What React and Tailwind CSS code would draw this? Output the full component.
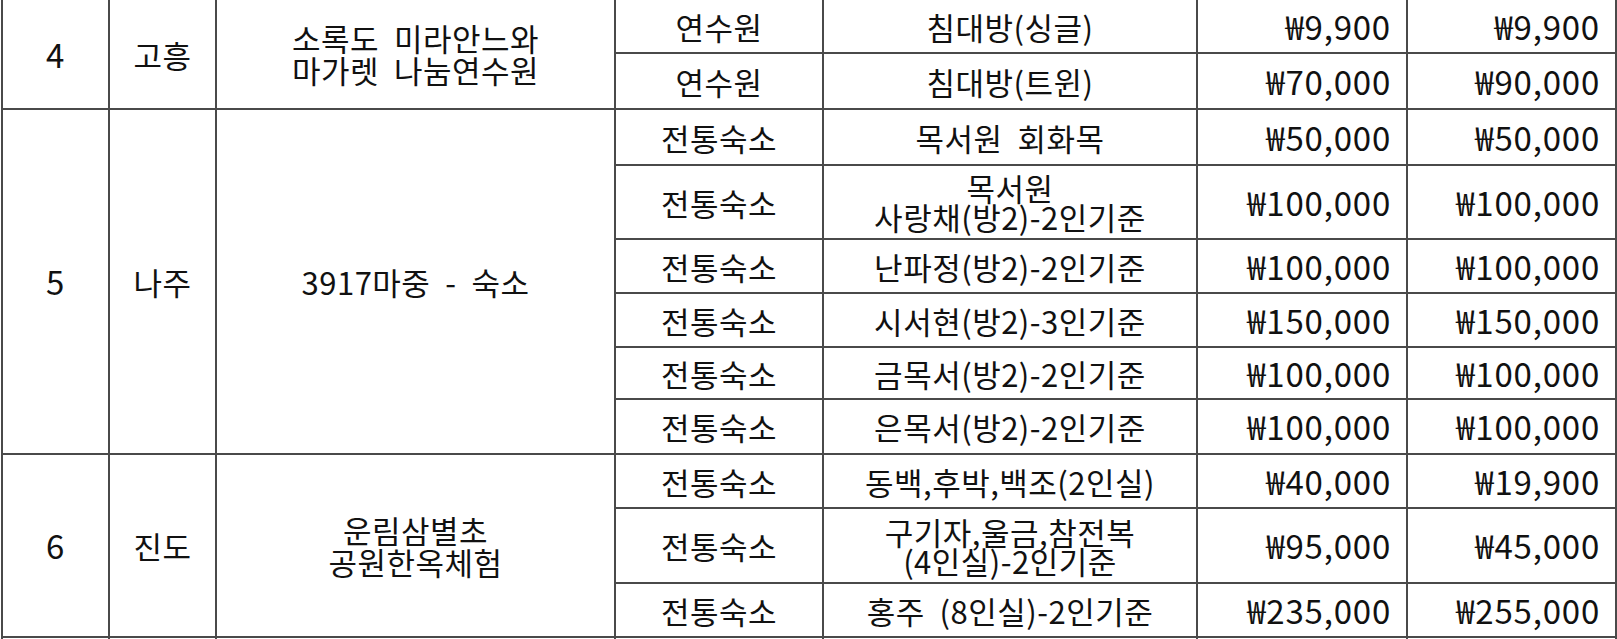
import React from "react";

const groups = [
  {
    no: "4",
    region: "고흥",
    name: "소록도  미라안느와\n마가렛  나눔연수원",
    rows: [
      { h: 56, type: "연수원", room: "침대방(싱글)", p1: "₩9,900", p2: "₩9,900" },
      { h: 56, type: "연수원", room: "침대방(트윈)", p1: "₩70,000", p2: "₩90,000" },
    ],
  },
  {
    no: "5",
    region: "나주",
    name: "3917마중  -  숙소",
    rows: [
      { h: 56, type: "전통숙소", room: "목서원  회화목", p1: "₩50,000", p2: "₩50,000" },
      { h: 74, type: "전통숙소", room: "목서원\n사랑채(방2)-2인기준", p1: "₩100,000", p2: "₩100,000" },
      { h: 54, type: "전통숙소", room: "난파정(방2)-2인기준", p1: "₩100,000", p2: "₩100,000" },
      { h: 54, type: "전통숙소", room: "시서현(방2)-3인기준", p1: "₩150,000", p2: "₩150,000" },
      { h: 52, type: "전통숙소", room: "금목서(방2)-2인기준", p1: "₩100,000", p2: "₩100,000" },
      { h: 55, type: "전통숙소", room: "은목서(방2)-2인기준", p1: "₩100,000", p2: "₩100,000" },
    ],
  },
  {
    no: "6",
    region: "진도",
    name: "운림삼별초\n공원한옥체험",
    rows: [
      { h: 54, type: "전통숙소", room: "동백,후박,백조(2인실)", p1: "₩40,000", p2: "₩19,900" },
      { h: 75, type: "전통숙소", room: "구기자,울금,참전복\n(4인실)-2인기준", p1: "₩95,000", p2: "₩45,000" },
      { h: 54, type: "전통숙소", room: "홍주  (8인실)-2인기준", p1: "₩235,000", p2: "₩255,000" },
    ],
  },
];

const cell = "border-2 border-[#4a4a4a] text-center align-middle whitespace-pre leading-[29px] p-0";
const cellN = "border-2 border-[#4a4a4a] text-center align-middle whitespace-pre leading-[29px] p-0 text-[33px]";
const cellR =
  "border-2 border-[#4a4a4a] text-right align-middle whitespace-pre leading-[29px] p-0 pr-[15px] text-[33px] tracking-[0.8px]";

export default function App() {
  const firstRowHeightFix = (gi, ri, h) => (gi === 0 && ri === 0 ? 54 : h);
  return (
    <div className="bg-white w-[1617px] h-[639px] overflow-hidden">
      <table
        className="table-fixed border-collapse ml-[1px] -mt-[2px] text-[31px] tracking-[0.5px] text-[#111]"
        style={{ width: 1614, fontFamily: '"Noto Sans CJK KR", "Noto Sans", sans-serif' }}
      >
        <colgroup>
          <col className="w-[107px]" />
          <col className="w-[107px]" />
          <col className="w-[399px]" />
          <col className="w-[208px]" />
          <col className="w-[374px]" />
          <col className="w-[210px]" />
          <col className="w-[209px]" />
        </colgroup>
        <tbody>
          {groups.map((g, gi) =>
            g.rows.map((r, ri) => (
              <tr key={gi + "-" + ri} style={{ height: firstRowHeightFix(gi, ri, r.h) }}>
                {ri === 0 && (
                  <>
                    <td rowSpan={g.rows.length} className={cellN}>{g.no}</td>
                    <td rowSpan={g.rows.length} className={cell}>{g.region}</td>
                    <td rowSpan={g.rows.length} className={cell + " leading-[32px]"}>{g.name}</td>
                  </>
                )}
                <td className={cell}>{r.type}</td>
                <td className={cell}>{r.room}</td>
                <td className={cellR}>{r.p1}</td>
                <td className={cellR}>{r.p2}</td>
              </tr>
            ))
          )}
          <tr className="h-[54px]">
            <td className={cell}></td>
            <td className={cell}></td>
            <td className={cell}></td>
            <td className={cell}></td>
            <td className={cell}></td>
            <td className={cellR}></td>
            <td className={cellR}></td>
          </tr>
        </tbody>
      </table>
    </div>
  );
}
